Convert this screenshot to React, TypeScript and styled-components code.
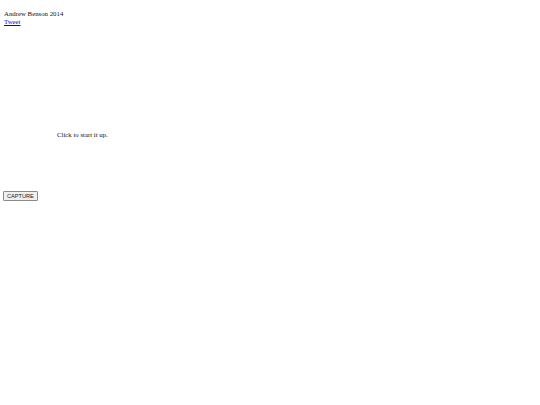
import React from "react";
import styled, { createGlobalStyle } from "styled-components";

const GlobalStyle = createGlobalStyle`
  html, body {
    margin: 0;
    padding: 0;
    background: #fff;
  }
  body {
    padding: 4px 4px;
    font-family: "Liberation Serif", "Times New Roman", serif;
    font-size: 6.8px;
    line-height: 8px;
    color: #111;
  }
`;

const Credits = styled.div`
  padding-top: 6px;
`;

const TweetLink = styled.a`
  color: #0000ee;
  text-decoration: underline;
`;

const Stage = styled.div`
  height: 165px;
  padding: 105px 0 0 53px;
  box-sizing: border-box;
`;

const CaptureButton = styled.button`
  font-family: "Liberation Sans", Arial, sans-serif;
  font-size: 5.6px;
  line-height: 6px;
  padding: 1px 3px;
  margin: 0 0 0 -1px;
  color: #222;
  background: #efefef;
  border: 1px solid #8a8a8a;
  border-radius: 1px;
`;

const App = () => (
  <>
    <GlobalStyle />
    <Credits>
      Andrew Benson 2014
      <br />
      <TweetLink href="#">Tweet</TweetLink>
    </Credits>
    <Stage>Click to start it up.</Stage>
    <CaptureButton>CAPTURE</CaptureButton>
  </>
);

export default App;
